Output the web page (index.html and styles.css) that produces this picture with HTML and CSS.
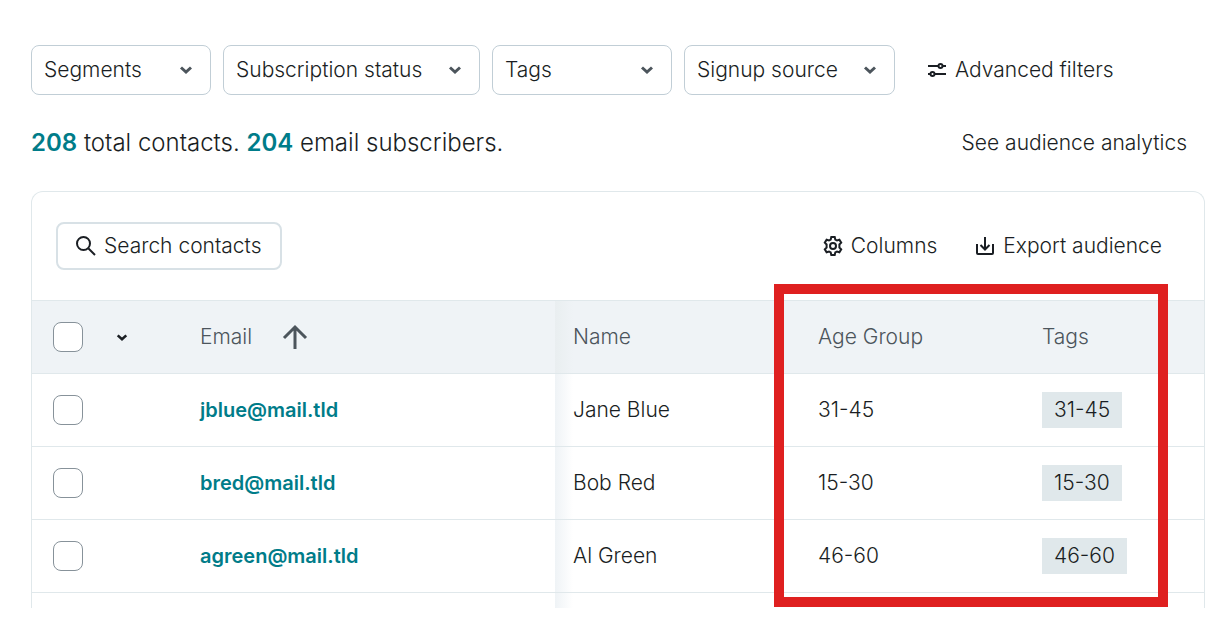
FILE: index.html
```
<!DOCTYPE html>
<html lang="en">
  <head>
    <meta charset="UTF-8" />
    <meta name="viewport" content="width=device-width, initial-scale=1.0" />
    <title>Audience</title>
    <link rel="stylesheet" href="styles.css">
  </head>
  <body>
    <div class="filters">
      <div class="filter">
        <select aria-label="Segments"><option>Segments</option></select>
        <svg class="chevron" viewBox="0 0 14 10"><path d="M2 2.500l5 4.500 5-4.500" /></svg>
      </div>
      <div class="filter">
        <select aria-label="Subscription status"><option>Subscription status</option></select>
        <svg class="chevron" viewBox="0 0 14 10"><path d="M2 2.500l5 4.500 5-4.500" /></svg>
      </div>
      <div class="filter">
        <select aria-label="Tags"><option>Tags</option></select>
        <svg class="chevron" viewBox="0 0 14 10"><path d="M2 2.500l5 4.500 5-4.500" /></svg>
      </div>
      <div class="filter">
        <select aria-label="Signup source"><option>Signup source</option></select>
        <svg class="chevron" viewBox="0 0 14 10"><path d="M2 2.500l5 4.500 5-4.500" /></svg>
      </div>
      <button class="link-button advanced">
        <svg class="icon" viewBox="0 0 20 20">
          <path d="M1 6h10.500M15.500 6H19M1 14h2.500M7.500 14H19" />
          <circle cx="13.500" cy="6" r="2" />
          <circle cx="5.500" cy="14" r="2" />
        </svg>
        Advanced filters
      </button>
    </div>

    <div class="summary">
      <p class="totals"><a href="#">208</a> total contacts. <a href="#">204</a> email subscribers.</p>
      <a class="analytics" href="#">See audience analytics</a>
    </div>

    <div class="panel">
      <div class="toolbar">
        <label class="search">
          <svg class="icon" viewBox="0 0 20 20">
            <circle cx="7.500" cy="7.500" r="6.500" />
            <path d="M12.500 12.500L19 19" />
          </svg>
          <input type="text" placeholder="Search contacts" aria-label="Search contacts" />
        </label>
        <div class="actions">
          <button class="link-button">
            <svg class="icon" viewBox="0 0 20 20">
              <path d="M8.300 1h3.400l.6 2.500 1.700 1 2.400-.8 1.800 3-1.800 1.800v3l1.800 1.800-1.800 3-2.400-.8-1.700 1-.6 2.500H8.300l-.6-2.500-1.700-1-2.400.8-1.800-3 1.800-1.800v-3L1.800 6.700l1.800-3 2.400.8 1.700-1z" />
              <circle cx="10" cy="10" r="3" />
            </svg>
            Columns
          </button>
          <button class="link-button">
            <svg class="icon" viewBox="0 0 20 20">
              <path d="M10 1v12M5.500 9l4.500 4.500L14.500 9M2 8v9q0 1 1 1h14q1 0 1-1V8" />
            </svg>
            Export audience
          </button>
        </div>
      </div>

      <div class="table-wrap">
        <table>
          <colgroup>
            <col class="col-check" />
            <col />
            <col class="col-name" />
            <col class="col-age" />
            <col class="col-tags" />
          </colgroup>
          <thead>
            <tr>
              <th>
                <div class="select-all">
                  <input type="checkbox" aria-label="Select all contacts" />
                  <button class="menu" aria-label="Selection options">
                    <svg viewBox="0 0 14 10"><path d="M2 2.500l5 4.500 5-4.500" /></svg>
                  </button>
                </div>
              </th>
              <th>
                <div class="sorted">
                  Email
                  <svg viewBox="0 0 26 26"><path d="M13 25V3M2 14L13 3l11 11" /></svg>
                </div>
              </th>
              <th class="shaded">Name</th>
              <th>Age Group</th>
              <th>Tags</th>
            </tr>
          </thead>
          <tbody>
            <tr>
              <td><input type="checkbox" aria-label="Select jblue@mail.tld" /></td>
              <td><a class="email" href="#">jblue@mail.tld</a></td>
              <td class="shaded">Jane Blue</td>
              <td>31-45</td>
              <td><span class="tag">31-45</span></td>
            </tr>
            <tr>
              <td><input type="checkbox" aria-label="Select bred@mail.tld" /></td>
              <td><a class="email" href="#">bred@mail.tld</a></td>
              <td class="shaded">Bob Red</td>
              <td>15-30</td>
              <td><span class="tag">15-30</span></td>
            </tr>
            <tr>
              <td><input type="checkbox" aria-label="Select agreen@mail.tld" /></td>
              <td><a class="email" href="#">agreen@mail.tld</a></td>
              <td class="shaded">Al Green</td>
              <td>46-60</td>
              <td><span class="tag">46-60</span></td>
            </tr>
            <tr class="next-row">
              <td></td>
              <td></td>
              <td class="shaded"></td>
              <td></td>
              <td></td>
            </tr>
          </tbody>
        </table>
        <div class="highlight"></div>
      </div>
    </div>
  </body>
</html>
```
FILE: styles.css
```
* {
  box-sizing: border-box;
}
body {
  margin: 0;
  padding: 45px 15px 13px 31px;
  background-color: #fff;
  color: #1a1e23;
  font-family: Inter, "Liberation Sans", sans-serif;
  font-size: 21px;
  font-weight: 300;
  line-height: 24px;
}
a {
  color: #007c89;
  text-decoration: none;
}
button, input, select {
  font: inherit;
  color: inherit;
}
svg {
  fill: none;
  stroke: currentColor;
  stroke-width: 2;
}
.icon {
  width: 20px;
  height: 20px;
  flex: none;
}
.filters {
  display: flex;
  align-items: center;
  gap: 12px;
}
.filter {
  display: grid;
  align-items: center;
  min-width: 180px;
}
.filter select,
.filter .chevron {
  grid-area: 1 / 1;
}
.filter select {
  appearance: none;
  height: 50px;
  padding: 0 56px 0 12px;
  border: 1px solid #c1ced6;
  border-radius: 8px;
  background-color: #fff;
}
.chevron {
  width: 14px;
  height: 10px;
  margin-right: 18px;
  justify-self: end;
  pointer-events: none;
  color: #4c555c;
  stroke-width: 3;
}
.link-button {
  display: flex;
  align-items: center;
  gap: 8px;
  padding: 0;
  border: none;
  background: none;
  white-space: nowrap;
  cursor: pointer;
}
.advanced {
  margin-left: 20px;
}
.summary {
  display: flex;
  align-items: center;
  justify-content: space-between;
  margin: 32px 18px 32px 0;
}
.totals {
  margin: 0;
  font-size: 24px;
  line-height: 32px;
}
.totals a {
  font-weight: 600;
}
.analytics {
  color: inherit;
}
.panel {
  border: 1px solid #e0e8eb;
  border-bottom: none;
  border-radius: 12px 12px 0 0;
}
.toolbar {
  display: flex;
  align-items: center;
  justify-content: space-between;
  padding: 30px 42px 30px 24px;
}
.search {
  display: flex;
  align-items: center;
  gap: 8px;
  width: 226px;
  height: 48px;
  padding: 0 14px 0 18px;
  border: 2px solid #d8e1e6;
  border-radius: 8px;
}
.search input {
  flex: 1;
  min-width: 0;
  padding: 0;
  border: none;
  outline: none;
  background: none;
}
.search input::placeholder {
  color: #1a1e23;
  opacity: 1;
}
.actions {
  display: flex;
  gap: 38px;
}
.table-wrap {
  position: relative;
}
table {
  width: 100%;
  table-layout: fixed;
  border-collapse: separate;
  border-spacing: 0;
}
.col-check { width: 150px; }
.col-name { width: 245px; }
.col-age { width: 224px; }
.col-tags { width: 180px; }
th, td {
  height: 73px;
  padding: 0 0 0 18px;
  border-top: 1px solid #e0e8eb;
  text-align: left;
}
th:first-child,
td:first-child {
  padding-left: 21px;
}
th {
  background-color: #eff3f6;
  color: #4c555c;
  font-weight: 300;
}
.shaded {
  background-image: linear-gradient(to right, #e9eef0, rgba(239, 243, 246, 0) 18px);
}
td.shaded {
  background-image: linear-gradient(to right, #eff3f6, rgba(239, 243, 246, 0) 18px);
}
.next-row td {
  height: 16px;
}
input[type="checkbox"] {
  appearance: none;
  display: block;
  width: 30px;
  height: 30px;
  margin: 0;
  border: 1px solid #87929a;
  border-radius: 8px;
  background-color: #fff;
}
input[type="checkbox"]:checked {
  background-color: #007c89;
}
.select-all {
  display: flex;
  align-items: center;
  gap: 33px;
}
.menu {
  display: flex;
  padding: 0;
  border: none;
  background: none;
  color: #1a1e23;
  cursor: pointer;
}
.menu svg {
  width: 12px;
  height: 9px;
  stroke-width: 3;
}
.sorted {
  display: flex;
  align-items: center;
  gap: 30px;
}
.sorted svg {
  width: 26px;
  height: 26px;
  stroke-width: 3;
}
.email {
  font-size: 20px;
  font-weight: 600;
}
.tag {
  display: inline-block;
  padding: 6px 12px;
  background-color: #e0e8eb;
}
/* callout over the Age Group and Tags columns */
.highlight {
  position: absolute;
  top: -16px;
  right: 36px;
  bottom: 1px;
  width: 394px;
  border: 10px solid #df2020;
  pointer-events: none;
}
```
